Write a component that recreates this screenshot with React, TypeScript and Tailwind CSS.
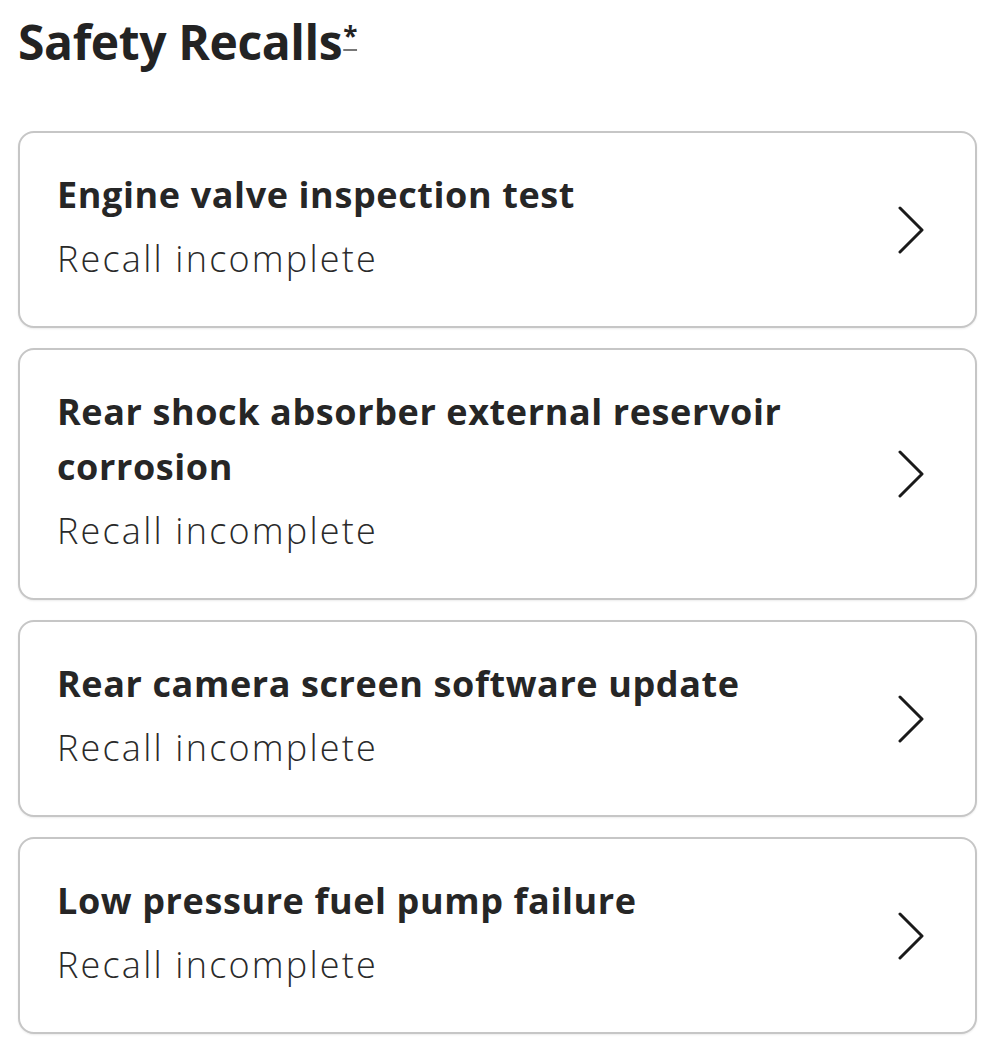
import React from "react";

const recalls = [
  { title: "Engine valve inspection test", status: "Recall incomplete" },
  { title: "Rear shock absorber external reservoir corrosion", status: "Recall incomplete" },
  { title: "Rear camera screen software update", status: "Recall incomplete" },
  { title: "Low pressure fuel pump failure", status: "Recall incomplete" },
];

function Chevron() {
  return (
    <svg width="28" height="48" viewBox="0 0 28 48" fill="none" className="shrink-0 mt-[6px]">
      <path d="M3 2 L25 24 L3 46" stroke="#1a1a1a" strokeWidth="3" strokeLinecap="round" strokeLinejoin="round" />
    </svg>
  );
}

export default function App() {
  return (
    <div className="w-[995px] min-h-[1064px] bg-white font-['Open_Sans',sans-serif] text-[#222]">
      <div className="px-[18px] pt-[14px]">
        <h1 className="text-[48px] font-bold leading-[56px] tracking-[-0.4px] text-[#232323]">
          Safety Recalls
          <sup className="relative top-[-14px] ml-[1px] text-[26px] font-bold underline decoration-[#777] decoration-2 underline-offset-[3px]">
            *
          </sup>
        </h1>

        {/* Recall list */}
        <div className="mt-[61px] flex flex-col gap-[20px]">
          {recalls.map((r) => (
            <button
              key={r.title}
              className="w-[959px] flex items-center justify-between text-left border-2 border-[#c6c6c6] rounded-[16px] bg-white pl-[37px] pr-[50px] pt-[34px] pb-[40px] shadow-[0_1px_2px_rgba(0,0,0,0.08)]"
            >
              <div className="max-w-[760px]">
                <div className="text-[36px] font-bold leading-[55px] tracking-[0.6px] text-[#262626]">{r.title}</div>
                <div className="mt-[9px] text-[36px] font-light leading-[55px] tracking-[2.2px] text-[#2a2a2a]">{r.status}</div>
              </div>
              <Chevron />
            </button>
          ))}
        </div>
      </div>
    </div>
  );
}
